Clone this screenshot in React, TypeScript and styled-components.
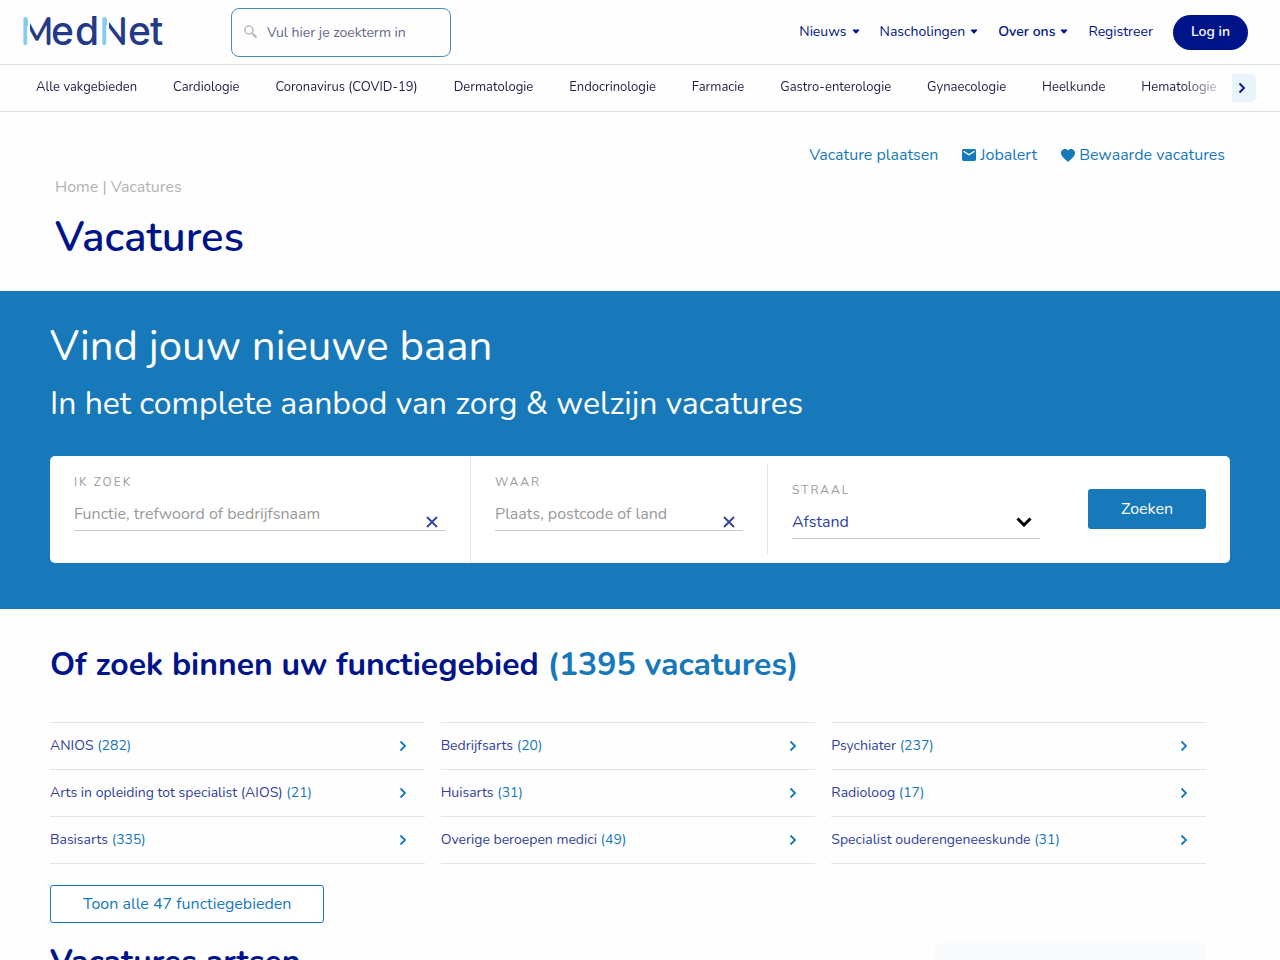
import React from "react";
import styled, { createGlobalStyle, css } from "styled-components";

const navy = "#001489";
const indigo = "#31419a";
const blue = "#1779ba";
const line = "#e4e4e4";

const GlobalStyle = createGlobalStyle`
  *, *::before, *::after { box-sizing: border-box; }
  body {
    margin: 0;
    background: #fefefe;
    color: ${navy};
    font-family: Nunito, Lato, "Open Sans", sans-serif;
    font-size: 16px;
    line-height: 24px;
  }
  a { color: inherit; text-decoration: none; }
  button, input, select { font: inherit; }
  h1, h2, p { margin: 0; }
`;

const Page = styled.div`
  height: 100vh;
  overflow: hidden;
`;

/* Header */
const Header = styled.header`
  display: flex;
  align-items: center;
  height: 65px;
  padding: 0 32px 0 20px;
  border-bottom: 1px solid #d9dde6;
`;

const LogoLink = styled.a`
  display: block;
  width: 148px;
  height: 52px;
  margin-right: 63px;
`;

const SiteSearch = styled.label`
  display: flex;
  align-items: center;
  gap: 9px;
  width: 220px;
  height: 49px;
  padding: 0 12px;
  border: 1px solid #4a8cbb;
  border-radius: 8px;
`;

const SiteSearchInput = styled.input`
  flex: 1;
  min-width: 0;
  padding: 2px 0 0;
  border: 0;
  outline: 0;
  background: transparent;
  font-size: 14px;
  &::placeholder { color: #66668a; opacity: 1; }
`;

const MainNav = styled.nav`
  display: flex;
  align-items: center;
  gap: 20px;
  margin-left: auto;
  font-size: 14px;
`;

const NavButton = styled.button<{ $active?: boolean }>`
  display: flex;
  align-items: center;
  gap: 5px;
  padding: 0 0 1px;
  border: 0;
  background: none;
  color: ${navy};
  font-weight: ${(p) => (p.$active ? 600 : 400)};
  cursor: pointer;
`;

const LoginButton = styled.button`
  height: 35px;
  padding: 0 18px;
  border: 0;
  border-radius: 18px;
  background: ${navy};
  color: #fff;
  font-size: 14px;
  font-weight: 600;
`;

/* Specialism bar */
const TopicBar = styled.nav`
  display: flex;
  align-items: center;
  height: 47px;
  padding: 0 24px 0 36px;
  border-bottom: 1px solid #d9dde6;
`;

const TopicList = styled.ul`
  display: flex;
  flex: 1;
  min-width: 0;
  gap: 36px;
  margin: 0;
  padding: 0 0 2px;
  list-style: none;
  overflow: hidden;
  white-space: nowrap;
  color: #1f1f47;
  font-size: 13px;
  line-height: 20px;
  mask-image: linear-gradient(to right, #000 calc(100% - 50px), transparent);
`;

const NextButton = styled.button`
  display: grid;
  place-items: center;
  width: 24px;
  height: 28px;
  padding: 0 4px 0 0;
  border: 0;
  border-radius: 0 5px 5px 0;
  background: #e8f3fa;
  color: ${navy};
`;

/* Title area */
const Intro = styled.section`
  height: 179px;
  padding: 31px 55px 0;
`;

const Tools = styled.div`
  display: flex;
  justify-content: flex-end;
  gap: 24px;
  color: ${blue};
`;

const ToolLink = styled.a`
  display: flex;
  align-items: center;
  gap: 4px;
`;

const Breadcrumb = styled.nav`
  margin-top: 8px;
  color: #b3b3b3;
`;

const PageTitle = styled.h1`
  margin-top: 9px;
  font-size: 42px;
  line-height: 60px;
  font-weight: 600;
`;

/* Search banner */
const Hero = styled.section`
  height: 318px;
  padding: 26px 50px 0;
  background: ${blue};
  color: #fff;
`;

const HeroTitle = styled.h2`
  font-size: 42px;
  line-height: 60px;
  font-weight: 400;
`;

const HeroText = styled.p`
  margin-top: 5px;
  font-size: 32px;
  line-height: 44px;
`;

const SearchForm = styled.form`
  display: flex;
  height: 107px;
  margin-top: 30px;
  border-radius: 5px;
  background: #fff;
`;

const Field = styled.div<{ $basis: number; $inset?: boolean }>`
  flex: ${(p) => p.$basis} 1 ${(p) => p.$basis}px;
  min-width: 0;
  padding: 16px 24px 0;
  ${(p) =>
    p.$inset
      ? css`margin: 8px 0;`
      : css`border-right: 1px solid ${line};`}
`;

const OpenField = styled(Field)`
  border-right: 0;
`;

const InsetField = styled(Field)`
  border-left: 1px solid ${line};
`;

const FieldLabel = styled.label`
  display: block;
  color: #9a9a9a;
  font-size: 12px;
  line-height: 20px;
  letter-spacing: 2px;
`;

const Control = styled.div`
  display: flex;
  align-items: center;
  height: 39px;
  border-bottom: 1px solid #c8c8c8;
`;

const TextInput = styled.input`
  flex: 1;
  min-width: 0;
  height: 38px;
  padding: 6px 0 0;
  border: 0;
  outline: 0;
  background: transparent;
  color: ${indigo};
  &::placeholder { color: #999; opacity: 1; }
`;

const ClearButton = styled.button`
  display: grid;
  align-self: flex-end;
  place-items: center;
  width: 28px;
  height: 17px;
  padding: 0;
  border: 0;
  background: none;
  color: ${indigo};
`;

const Select = styled.select`
  flex: 1;
  height: 38px;
  padding: 6px 0 0;
  border: 0;
  outline: 0;
  appearance: none;
  background: transparent;
  color: ${indigo};
`;

const SelectArrow = styled.span`
  display: grid;
  width: 24px;
  margin-right: 4px;
  padding-top: 6px;
  place-items: center;
  pointer-events: none;
  color: #000;
`;

const Submit = styled.button`
  flex: none;
  width: 118px;
  height: 40px;
  margin: 33px 24px 0;
  padding: 0;
  border: 0;
  border-radius: 3px;
  background: ${blue};
  color: #fff;
`;

/* Job areas */
const Content = styled.main`
  padding: 32px 74px 0 50px;
`;

const SectionTitle = styled.h2`
  font-size: 32px;
  line-height: 48px;
  font-weight: 700;
  span { color: ${blue}; }
`;

const AreaGrid = styled.div`
  display: grid;
  grid-template-columns: repeat(3, 1fr);
  gap: 16px;
  margin-top: 33px;
`;

const AreaList = styled.ul`
  margin: 0;
  padding: 0;
  list-style: none;
  border-bottom: 1px solid ${line};
`;

const AreaLink = styled.a`
  display: flex;
  align-items: center;
  justify-content: space-between;
  height: 47px;
  padding-right: 16px;
  border-top: 1px solid ${line};
  color: ${indigo};
  font-size: 14px;
  em { color: ${blue}; font-style: normal; }
  svg { color: ${blue}; }
`;

const ShowAll = styled.button`
  height: 38px;
  margin-top: 21px;
  padding: 0 32px;
  border: 1px solid ${blue};
  border-radius: 3px;
  background: #fff;
  color: ${blue};
`;

const Results = styled.section`
  display: flex;
  justify-content: space-between;
  margin-top: 15px;
`;

const SideCard = styled.aside`
  width: 271px;
  height: 240px;
  margin-top: 5px;
  border-radius: 4px;
  background: #f8fafc;
`;

const Logo = () => (
  <svg width="148" height="52" viewBox="0 0 148 52" role="img" aria-label="MedNet">
    <defs>
      <linearGradient id="mark-m" gradientUnits="userSpaceOnUse" x1="0" x2="40" y1="0" y2="0">
        <stop offset=".2" stopColor="#84cdee" />
        <stop offset=".2" stopColor="#84cdee" stopOpacity="0" />
        <stop offset=".26" stopColor="#243a87" stopOpacity="0" />
        <stop offset=".26" stopColor="#243a87" />
      </linearGradient>
      <linearGradient id="mark-n" gradientUnits="userSpaceOnUse" x1="79" x2="119" y1="0" y2="0">
        <stop offset=".2" stopColor="#84cdee" />
        <stop offset=".2" stopColor="#84cdee" stopOpacity="0" />
        <stop offset=".26" stopColor="#243a87" stopOpacity="0" />
        <stop offset=".26" stopColor="#243a87" />
      </linearGradient>
    </defs>
    <g fontFamily="Nunito, Lato, sans-serif" fontSize="39" fontWeight="600">
      <text x="0" y="39" fill="url(#mark-m)">M</text>
      <text x="79" y="39" fill="url(#mark-n)">N</text>
    </g>
    <g fontFamily="Inter, sans-serif" fontSize="39" fontWeight="500" fill="#243a87">
      <text x="31" y="39">e</text>
      <text x="55" y="39">d</text>
      <text x="108" y="39">e</text>
      <text x="130" y="39">t</text>
    </g>
  </svg>
);

const Caret = () => (
  <svg width="8" height="5" viewBox="0 0 8 5" aria-hidden="true">
    <path fill="currentColor" d="M1.500.5h5q1 0 .6.7L4.7 4.200q-.7.8-1.400 0L.9 1.200Q.5.5 1.500.5z" />
  </svg>
);

const Chevron = () => (
  <svg width="12" height="12" viewBox="0 0 12 12" aria-hidden="true">
    <path d="M3.500 1.500 8 6 3.500 10.500" fill="none" stroke="currentColor" strokeWidth="1.8" />
  </svg>
);

const Cross = () => (
  <svg width="12" height="12" viewBox="0 0 12 12" aria-hidden="true">
    <path d="M1 1l10 10M11 1 1 11" stroke="currentColor" strokeWidth="1.8" />
  </svg>
);

const menus = ["Nieuws", "Nascholingen", "Over ons"];
const topics = [
  "Alle vakgebieden", "Cardiologie", "Coronavirus (COVID-19)", "Dermatologie", "Endocrinologie",
  "Farmacie", "Gastro-enterologie", "Gynaecologie", "Heelkunde", "Hematologie",
];
const areas: [string, number][][] = [
  [["ANIOS", 282], ["Arts in opleiding tot specialist (AIOS)", 21], ["Basisarts", 335]],
  [["Bedrijfsarts", 20], ["Huisarts", 31], ["Overige beroepen medici", 49]],
  [["Psychiater", 237], ["Radioloog", 17], ["Specialist ouderengeneeskunde", 31]],
];

export default function App() {
  return (
    <Page>
      <GlobalStyle />
      <Header>
        <LogoLink href="#"><Logo /></LogoLink>
        <SiteSearch>
          <svg width="14" height="14" viewBox="0 0 14 14" fill="none" stroke="#b9b9b9" aria-hidden="true">
            <circle cx="5" cy="5" r="4" strokeWidth="1.500" />
            <path d="m8 8 4.500 4.500" strokeWidth="2" />
          </svg>
          <SiteSearchInput type="text" aria-label="Zoekterm" placeholder="Vul hier je zoekterm in" />
        </SiteSearch>
        <MainNav>
          {menus.map((m) => (
            <NavButton key={m} $active={m === "Over ons"}>{m}<Caret /></NavButton>
          ))}
          <a href="#">Registreer</a>
          <LoginButton>Log in</LoginButton>
        </MainNav>
      </Header>
      <TopicBar>
        <TopicList>
          {topics.map((t) => <li key={t}><a href="#">{t}</a></li>)}
        </TopicList>
        <NextButton aria-label="Volgende"><Chevron /></NextButton>
      </TopicBar>
      <Intro>
        <Tools>
          <ToolLink href="#">Vacature plaatsen</ToolLink>
          <ToolLink href="#">
            <svg width="14" height="12" viewBox="0 0 14 12" aria-hidden="true">
              <rect width="14" height="12" rx="1.4" fill="currentColor" />
              <path d="m1.5 2.2 5.5 3.6 5.5-3.6" fill="none" stroke="#fff" strokeWidth="1.3" />
            </svg>
            Jobalert
          </ToolLink>
          <ToolLink href="#">
            <svg width="14" height="13" viewBox="0 0 14 13" aria-hidden="true">
              <path fill="currentColor" d="M7 13 6 12C2 8.500 0 6.700 0 4A3.900 3.900 0 0 1 7 1.500 3.900 3.900 0 0 1 14 4c0 2.700-2 4.500-6 8z" />
            </svg>
            Bewaarde vacatures
          </ToolLink>
        </Tools>
        <Breadcrumb aria-label="Kruimelpad"><a href="#">Home</a> | <a href="#">Vacatures</a></Breadcrumb>
        <PageTitle>Vacatures</PageTitle>
      </Intro>
      <Hero>
        <HeroTitle>Vind jouw nieuwe baan</HeroTitle>
        <HeroText>In het complete aanbod van zorg &amp; welzijn vacatures</HeroText>
        <SearchForm>
          <Field $basis={421}>
            <FieldLabel htmlFor="what">IK ZOEK</FieldLabel>
            <Control>
              <TextInput id="what" type="text" placeholder="Functie, trefwoord of bedrijfsnaam" />
              <ClearButton type="button" aria-label="Wis functie"><Cross /></ClearButton>
            </Control>
          </Field>
          <OpenField $basis={296}>
            <FieldLabel htmlFor="where">WAAR</FieldLabel>
            <Control>
              <TextInput id="where" type="text" placeholder="Plaats, postcode of land" />
              <ClearButton type="button" aria-label="Wis plaats"><Cross /></ClearButton>
            </Control>
          </OpenField>
          <InsetField $basis={297} $inset>
            <FieldLabel htmlFor="radius">STRAAL</FieldLabel>
            <Control>
              <Select id="radius"><option>Afstand</option></Select>
              <SelectArrow>
                <svg width="16" height="10" viewBox="0 0 16 10" aria-hidden="true">
                  <path d="m1.500 1.500 6.500 6.500 6.500-6.500" fill="none" stroke="currentColor" strokeWidth="3" />
                </svg>
              </SelectArrow>
            </Control>
          </InsetField>
          <Submit type="submit">Zoeken</Submit>
        </SearchForm>
      </Hero>
      <Content>
        <SectionTitle>Of zoek binnen uw functiegebied <span>(1395 vacatures)</span></SectionTitle>
        <AreaGrid>
          {areas.map((column, i) => (
            <AreaList key={i}>
              {column.map(([name, count]) => (
                <li key={name}>
                  <AreaLink href="#"><span>{name} <em>({count})</em></span><Chevron /></AreaLink>
                </li>
              ))}
            </AreaList>
          ))}
        </AreaGrid>
        <ShowAll>Toon alle 47 functiegebieden</ShowAll>
        <Results>
          <SectionTitle>Vacatures artsen</SectionTitle>
          <SideCard />
        </Results>
      </Content>
    </Page>
  );
}
